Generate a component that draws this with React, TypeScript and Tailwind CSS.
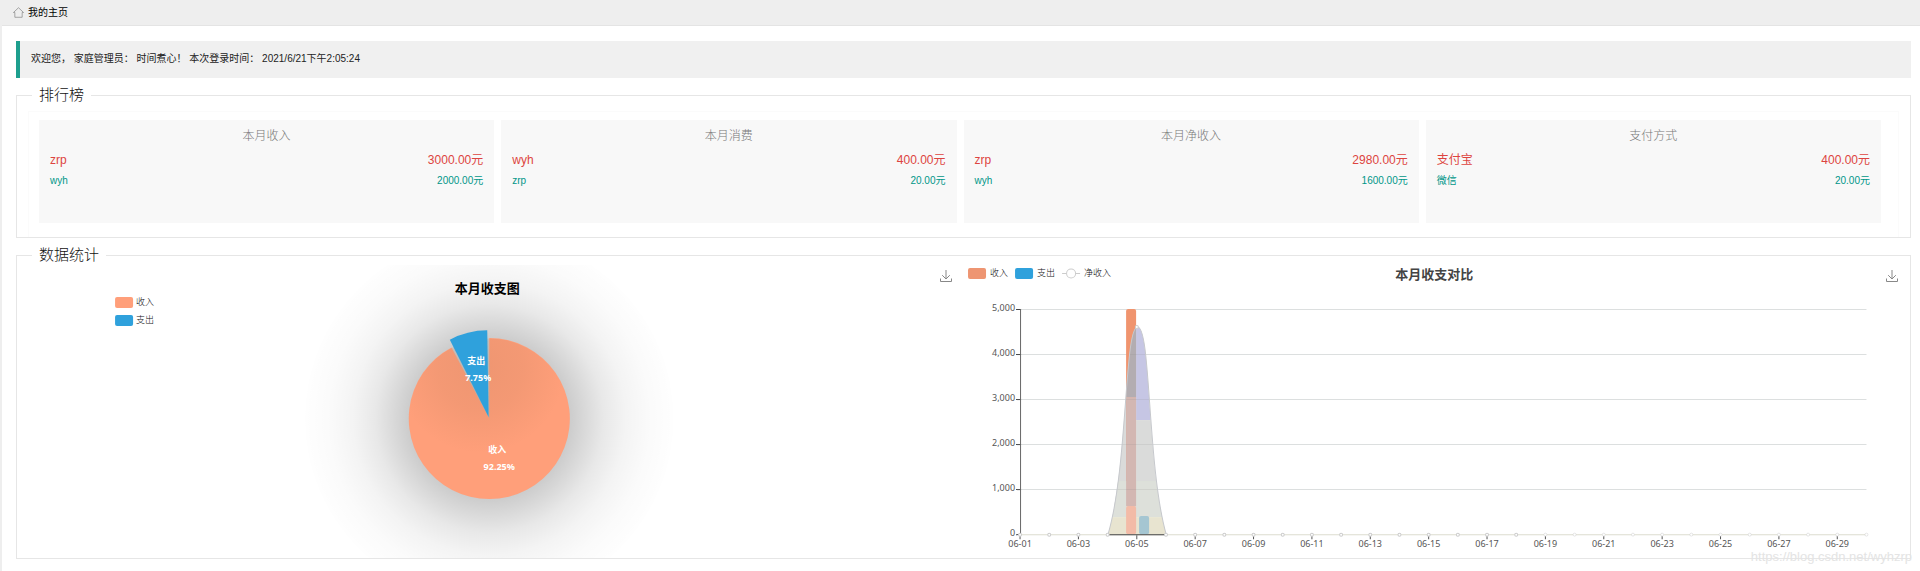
import type { ReactNode } from "react"

interface RankRow {
  name: string
  amount: string
}

interface RankCardProps {
  title: string
  rows: RankRow[]
}

const rankings: RankCardProps[] = [
  {
    title: "本月收入",
    rows: [
      { name: "zrp", amount: "3000.00元" },
      { name: "wyh", amount: "2000.00元" },
    ],
  },
  {
    title: "本月消费",
    rows: [
      { name: "wyh", amount: "400.00元" },
      { name: "zrp", amount: "20.00元" },
    ],
  },
  {
    title: "本月净收入",
    rows: [
      { name: "zrp", amount: "2980.00元" },
      { name: "wyh", amount: "1600.00元" },
    ],
  },
  {
    title: "支付方式",
    rows: [
      { name: "支付宝", amount: "400.00元" },
      { name: "微信", amount: "20.00元" },
    ],
  },
]

function RankCard({ title, rows }: RankCardProps) {
  return (
    <div className="h-[103px] bg-[#f8f8f8] px-[11px] pt-2">
      <h3 className="text-center text-xs leading-4 font-light text-[#777]">{title}</h3>
      <ul className="mt-1.5 space-y-px">
        {rows.map((row, i) => (
          <li
            key={row.name}
            className={
              i === 0
                ? "flex justify-between text-xs leading-5 text-[#dd4440]"
                : "flex justify-between text-[10px] leading-5 text-[#009688]"
            }
          >
            <span>{row.name}</span>
            <span>{row.amount}</span>
          </li>
        ))}
      </ul>
    </div>
  )
}

function Section({ title, children }: { title: string; children: ReactNode }) {
  return (
    <fieldset className="min-w-0 border border-[#e6e6e6]">
      <legend className="ml-[15px] px-[7px] text-[15px] leading-5 font-light text-[#111]">{title}</legend>
      {children}
    </fieldset>
  )
}

function DownloadButton() {
  return (
    <button type="button" aria-label="保存为图片" className="absolute top-[5px] right-3 h-3 w-3 cursor-pointer">
      <svg viewBox="0 0 12 12" className="block h-3 w-3" fill="none" stroke="#888" strokeWidth="1">
        <path d="M6 0v9M2.2 5.2 6 9l3.8-3.8M0.5 8.5v3h11v-3" />
      </svg>
    </button>
  )
}

function PieChart() {
  return (
    <div className="relative">
      <svg viewBox="0 -1 946 293" className="block w-full font-['Noto_Sans','Noto_Sans_CJK_SC',sans-serif]">
        <defs>
          <radialGradient id="pieShadow">
            <stop offset="0" stopColor="#000" stopOpacity="0.3" />
            <stop offset="0.42" stopColor="#000" stopOpacity="0.21" />
            <stop offset="0.52" stopColor="#000" stopOpacity="0.15" />
            <stop offset="0.62" stopColor="#000" stopOpacity="0.09" />
            <stop offset="0.74" stopColor="#000" stopOpacity="0.045" />
            <stop offset="0.87" stopColor="#000" stopOpacity="0.018" />
            <stop offset="1" stopColor="#000" stopOpacity="0.004" />
          </radialGradient>
          <radialGradient id="sliceShadow">
            <stop offset="0" stopColor="#964" stopOpacity="0.16" />
            <stop offset="0.5" stopColor="#964" stopOpacity="0.11" />
            <stop offset="1" stopColor="#964" stopOpacity="0" />
          </radialGradient>
          <clipPath id="pieBody">
            <circle cx="472" cy="152.5" r="80" />
          </clipPath>
        </defs>
        <circle cx="472" cy="152.5" r="184" fill="url(#pieShadow)" />
        <path d="M472 152.5V72A80.5 80.5 0 1 1 434.3 81.4Z" fill="#ff9f7a" />
        <circle cx="463" cy="102" r="85" fill="url(#sliceShadow)" clipPath="url(#pieBody)" />
        <path d="M471.3 151 470 64.2A80.5 80.5 0 0 0 432.6 73.6Z" fill="#2fa1dc" />

        <text x="470" y="27" textAnchor="middle" fontSize="13" fontWeight="700" fill="#000">
          本月收支图
        </text>
        <g fontSize="9" fontWeight="700" fill="#fff" textAnchor="middle">
          <text x="459" y="98">支出</text>
          <text x="461" y="115">7.75%</text>
          <text x="480" y="187">收入</text>
          <text x="482" y="204">92.25%</text>
        </g>
        <g fontSize="9" fontWeight="300" fill="#111">
          <rect x="98" y="31" width="18" height="11" rx="2" fill="#ff9f7a" />
          <text x="119" y="39">收入</text>
          <rect x="98" y="49" width="18" height="11" rx="2" fill="#2fa1dc" />
          <text x="119" y="57">支出</text>
        </g>
      </svg>
      <DownloadButton />
    </div>
  )
}

const left = 56
const right = 902
const base = 268
const days = Array.from({ length: 30 }, (_, i) => i + 1)
const dayX = (day: number) => left + ((day - 1) * (right - left)) / 29
const valueY = (value: number) => base - Math.round(value * 0.045)

const netIncome = "M144 268C164 200 160 61 173.500 61S183 200 202 268"

function CompareChart() {
  return (
    <div className="relative">
      <svg viewBox="0 -1 946 293" className="block w-full font-['Noto_Sans','Noto_Sans_CJK_SC',sans-serif]">
        <defs>
          <clipPath id="netArea">
            <path d={netIncome} />
          </clipPath>
        </defs>

        <g fontSize="9" fontWeight="300" fill="#111">
          <rect x="4" y="2" width="18" height="11" rx="2" fill="#ee9572" />
          <text x="26" y="10">收入</text>
          <rect x="51" y="2" width="18" height="11" rx="2" fill="#2fa1dc" />
          <text x="73" y="10">支出</text>
          <path d="M98 7.500h18" stroke="#ccc" />
          <circle cx="107" cy="7.500" r="4.500" fill="#fff" stroke="#ccc" />
          <text x="120" y="10">净收入</text>
        </g>
        <text x="470" y="13" textAnchor="middle" fontSize="13" fontWeight="700" fill="#444">
          本月收支对比
        </text>

        {[0, 1000, 2000, 3000, 4000, 5000].map((value) => (
          <g key={value}>
            {value > 0 && <path d={`M${left} ${valueY(value) + 0.5}H${right}`} stroke="#dcdfdf" />}
            <path d={`M${left - 4} ${valueY(value) + 0.5}h5`} stroke="#444" />
            <text x={left - 5} y={valueY(value) + 2} textAnchor="end" fontSize="9" fill="#555">
              {value.toLocaleString("en-US")}
            </text>
          </g>
        ))}
        <path d={`M${left + 0.5} 43V268`} stroke="#666" />

        <rect x="162" y="43" width="10" height="225" rx="2" fill="#f0946e" />
        <rect x="175" y="250" width="10" height="18" rx="2" fill="#2fa1dc" />

        {/* net income area, tinted in bands */}
        <g clipPath="url(#netArea)">
          <rect x="172" y="60" width="30" height="94" fill="#c6c6e4" />
          <rect x="144" y="60" width="18" height="191" fill="#dadbda" />
          <rect x="172" y="154" width="30" height="97" fill="#dadbda" />
          <rect x="144" y="215" width="58" height="36" fill="#dde0da" />
          <rect x="144" y="251" width="58" height="17" fill="#e8e4d0" />
          <rect x="162" y="60" width="10" height="71" fill="#b3adb1" />
          <rect x="162" y="131" width="10" height="109" fill="#d3b7b2" />
          <rect x="162" y="240" width="10" height="28" rx="2" fill="#f3bba7" />
          <rect x="175" y="250" width="10" height="18" rx="2" fill="#a5c6d2" />
          {[88, 133, 178, 223].map((y) => (
            <path key={y} d={`M144 ${y + 0.5}h58`} stroke="#888" strokeOpacity="0.15" />
          ))}
        </g>
        <path d={netIncome} fill="none" stroke="#c6c8cc" />

        <path d={`M${left} 268.500H${right}`} stroke="#dcdccf" />
        <path d="M145 268.500h56" stroke="#444" />
        {days.map((day) => (
          <g key={day}>
            {day % 2 === 1 && (
              <>
                <path d={`M${dayX(day)} 269v4`} stroke="#555" />
                <text x={dayX(day)} y="281" textAnchor="middle" fontSize="9" fill="#555">
                  {`06-${String(day).padStart(2, "0")}`}
                </text>
              </>
            )}
            <circle
              cx={dayX(day)}
              cy={day === 5 ? 61 : 268.5}
              r="1.500"
              fill="#fff"
              stroke="#ccc"
              strokeWidth={day > 18 ? 0.5 : 1}
            />
          </g>
        ))}
      </svg>
      <DownloadButton />
    </div>
  )
}

export default function App() {
  return (
    <div className="relative min-h-screen border-l-2 border-[#eee] bg-white font-['Liberation_Sans','Noto_Sans_CJK_SC',sans-serif] text-[10px] text-[#222]">
      <header className="flex h-[26px] items-center border-b border-[#e4e4e4] bg-[#eee] pl-[11px]">
        <a href="#" className="flex items-center gap-1 text-black">
          <svg viewBox="0 0 12 12" className="h-[11px] w-[11px]" fill="none" stroke="#888" strokeWidth="0.8">
            <path d="M0.500 6 6 0.800 11.500 6H10v5.200H2V6z" strokeLinejoin="round" />
          </svg>
          我的主页
        </a>
      </header>

      <main className="pt-[15px] pr-[9px] pl-[14px]">
        <blockquote className="border-l-4 border-[#1e9f8e] bg-[#f0f0f0] pt-2 pb-[9px] pl-[11px] leading-5 whitespace-pre">
          欢迎您， 家庭管理员： 时间煮心！ 本次登录时间： 2021/6/21下午2:05:24
        </blockquote>

        <div className="mt-[7px] space-y-[7px]">
          <Section title="排行榜">
            <div className="mx-[11px] mt-1.5 border border-b-0 border-[#fbfbfb] pt-2 pr-[17px] pb-3.5 pl-[10px]">
              <div className="grid grid-cols-4 gap-[7px]">
                {rankings.map((card) => (
                  <RankCard key={card.title} {...card} />
                ))}
              </div>
            </div>
          </Section>

          <Section title="数据统计">
            <div className="grid grid-cols-2">
              <PieChart />
              <CompareChart />
            </div>
          </Section>
        </div>
      </main>

      <span className="absolute right-2 bottom-1 text-[13px] leading-5 text-[#e4e4e4]">
        https://blog.csdn.net/wyhzrp
      </span>
    </div>
  )
}
